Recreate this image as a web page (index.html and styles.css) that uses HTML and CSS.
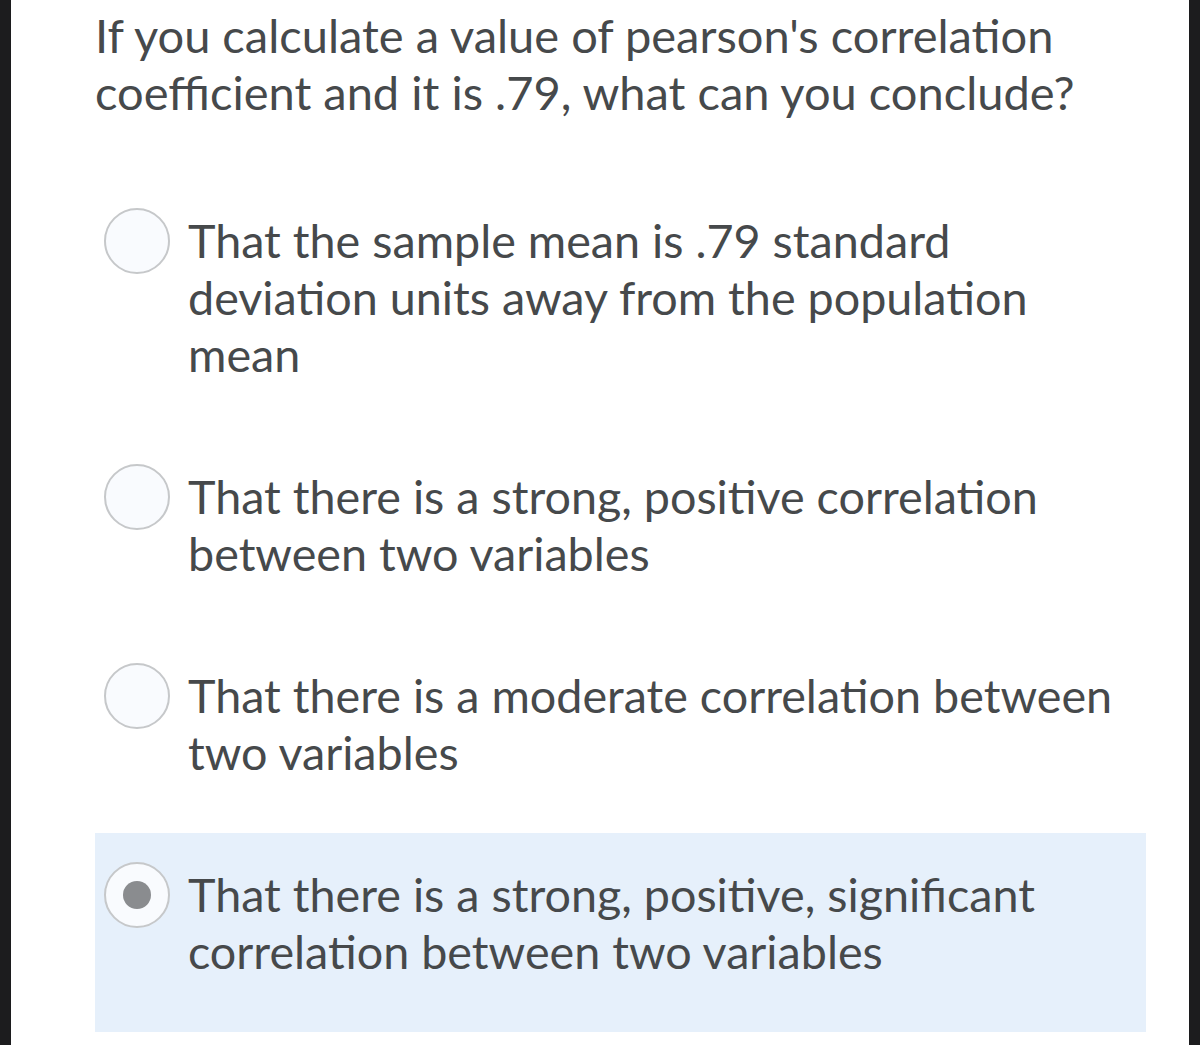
FILE: index.html
```html
<!DOCTYPE html>
<html>
<head>
<meta charset="utf-8">
<link rel="stylesheet" href="styles.css">
</head>
<body>
<div class="frame">
  <div class="page">
    <p class="question">If you calculate a value of pearson's correlation coefficient and it is .79, what can you conclude?</p>
    <div class="options">
      <label class="option">
        <span class="radio"></span>
        <span class="text">That the sample mean is .79 standard deviation units away from the population mean</span>
      </label>
      <label class="option">
        <span class="radio"></span>
        <span class="text">That there is a strong, positive correlation between two variables</span>
      </label>
      <label class="option">
        <span class="radio"></span>
        <span class="text">That there is a moderate correlation between two variables</span>
      </label>
      <label class="option selected">
        <span class="radio"><span class="dot"></span></span>
        <span class="text">That there is a strong, positive, significant correlation between two variables</span>
      </label>
    </div>
  </div>
</div>
</body>
</html>
```

FILE: styles.css
```css
html, body {
  margin: 0;
  padding: 0;
  background: #1c1c1e;
}
.frame {
  width: 1200px;
  height: 1045px;
  padding: 0 11px;
  box-sizing: border-box;
  overflow: hidden;
}
.page {
  background: #ffffff;
  height: 100%;
  padding: 7px 43px 0 84px;
  box-sizing: border-box;
  font-family: Lato, "Open Sans", sans-serif;
  color: #46494b;
}
.question {
  margin: 0 0 58px 0;
  font-size: 47px;
  line-height: 57px;
}
.options {
  display: flex;
  flex-direction: column;
}
.option {
  display: flex;
  align-items: flex-start;
  gap: 18px;
  padding: 33px 20px 52px 9px;
}
.option.selected {
  background: #e6f0fb;
}
.radio {
  flex: 0 0 auto;
  width: 66px;
  height: 66px;
  margin-top: -4px;
  border: 2px solid #c6c8ca;
  border-radius: 50%;
  background: #f9fbfe;
  box-sizing: border-box;
  display: flex;
  align-items: center;
  justify-content: center;
}
.dot {
  width: 28px;
  height: 28px;
  border-radius: 50%;
  background: #8a8c8f;
}
.text {
  font-size: 46.7px;
  line-height: 57px;
}
```
